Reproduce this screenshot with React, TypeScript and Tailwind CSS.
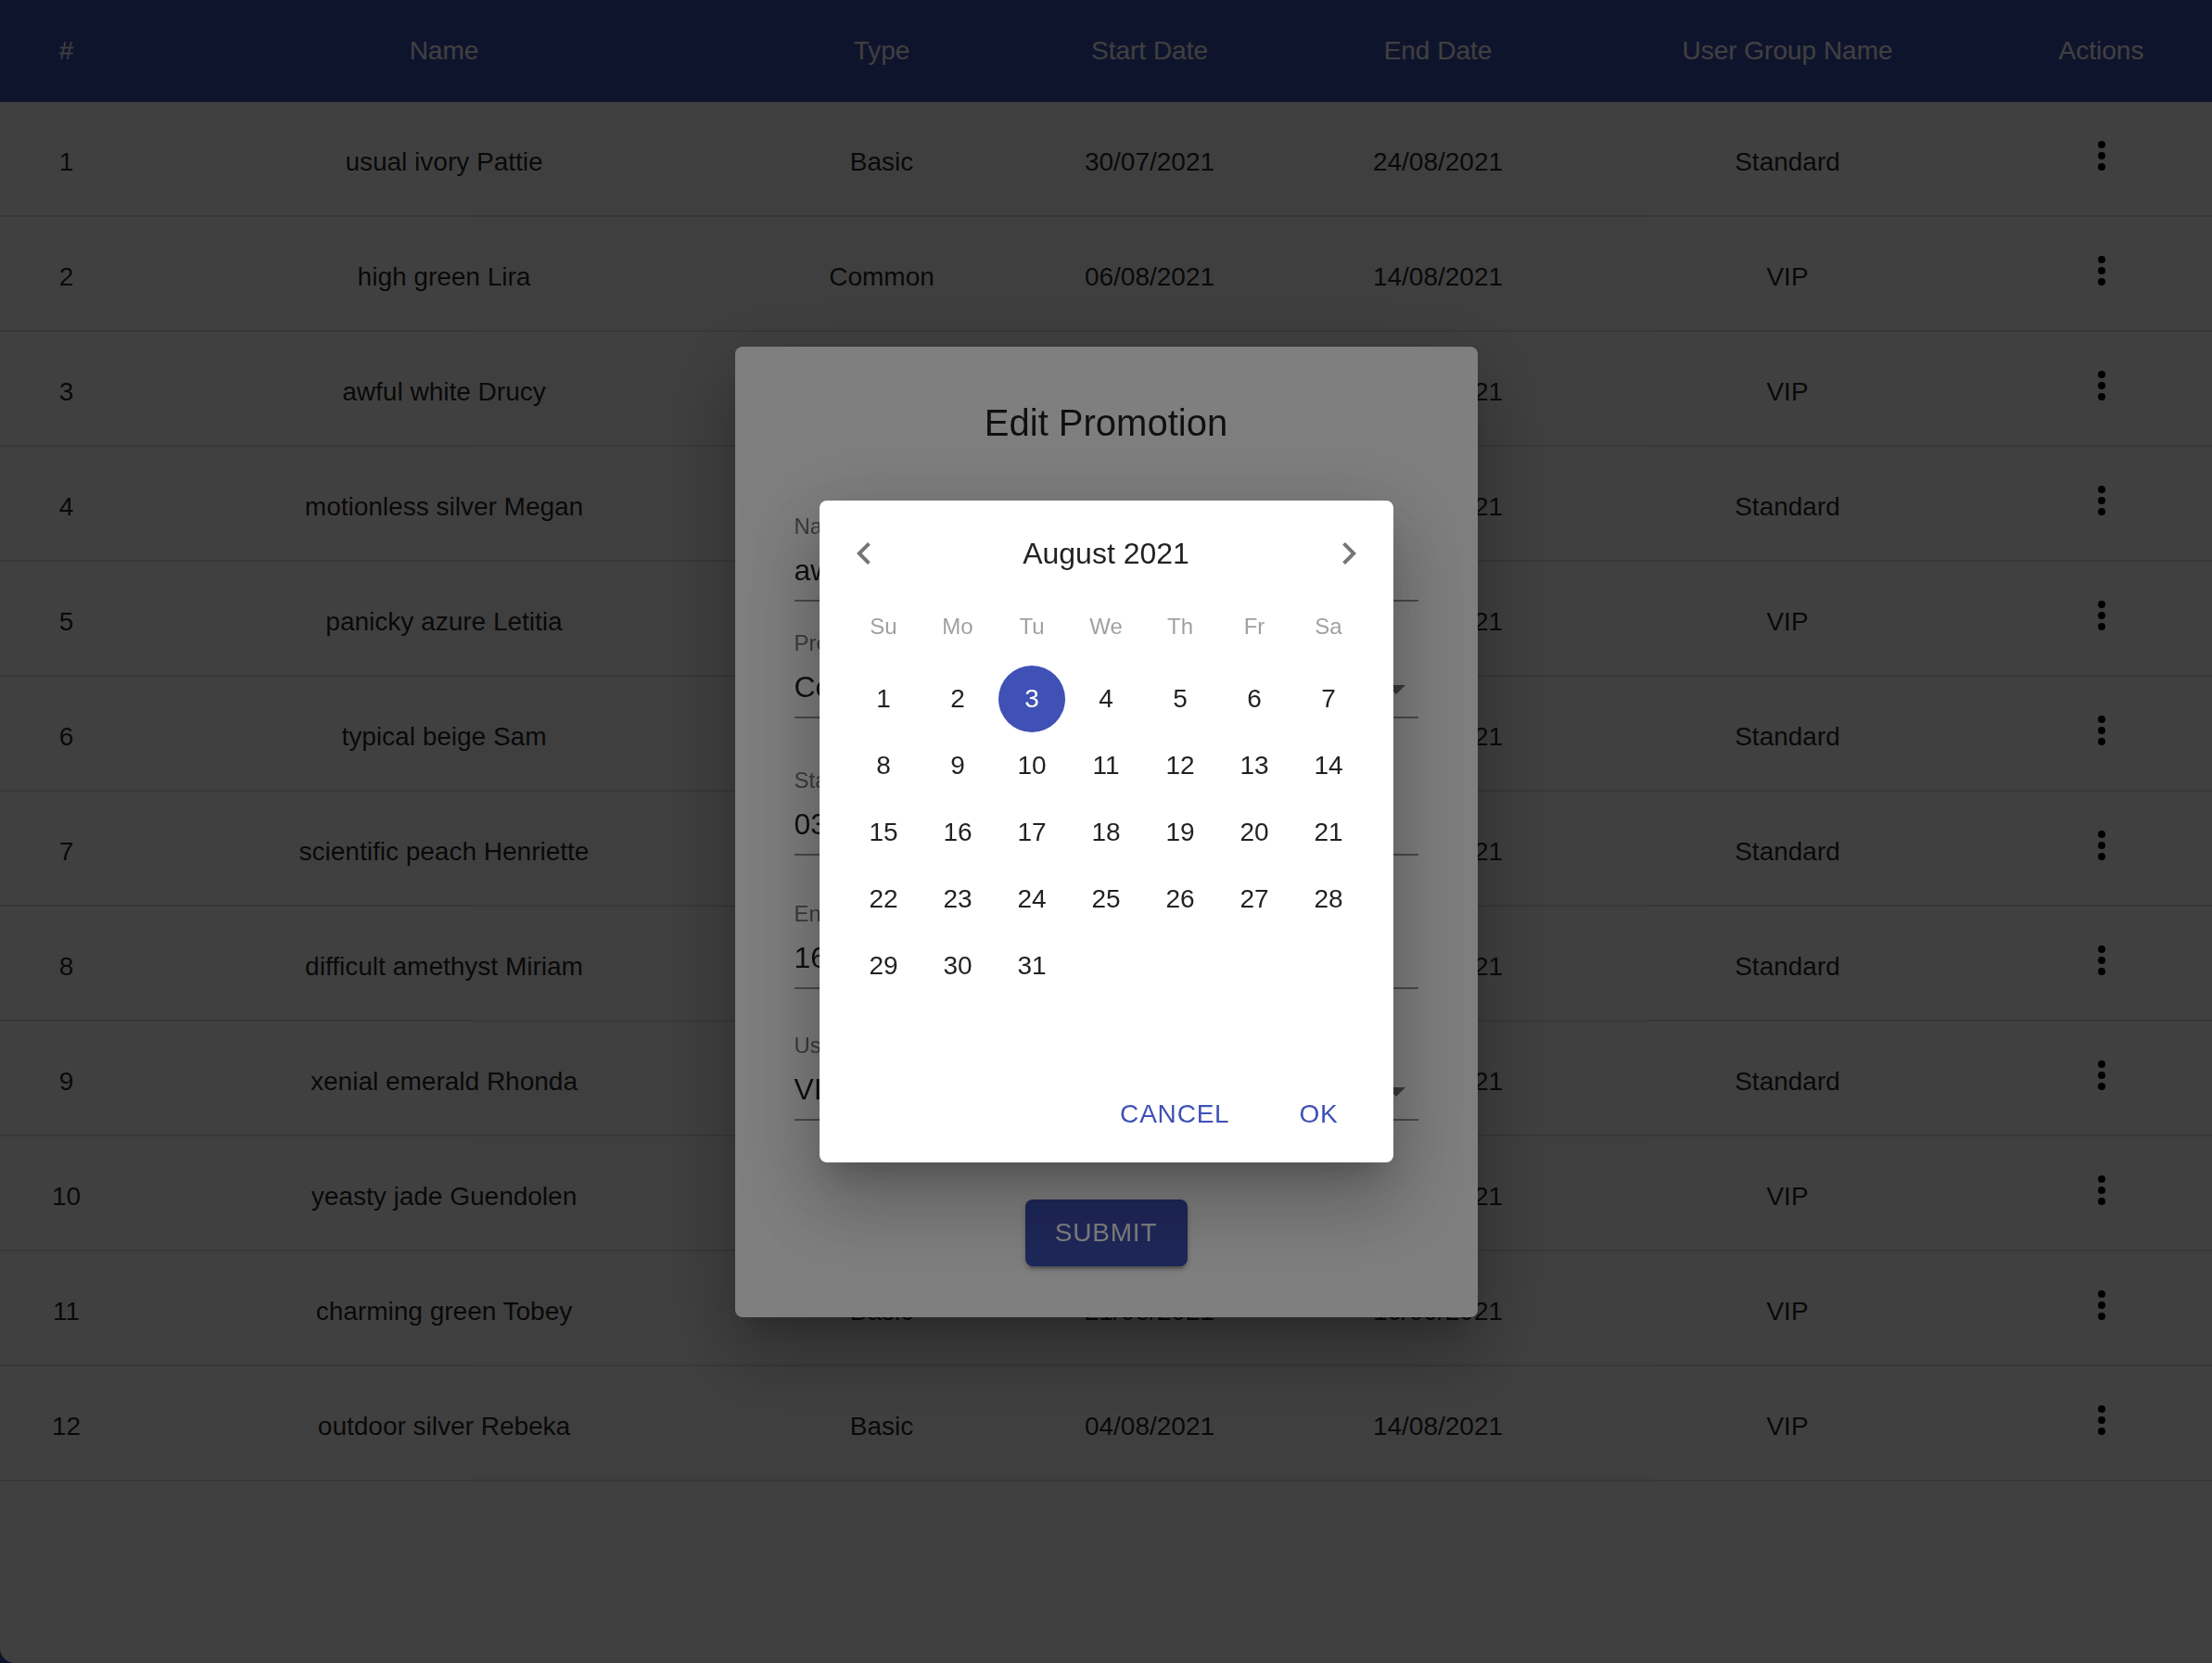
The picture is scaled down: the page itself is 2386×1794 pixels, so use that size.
import React from "react";

const rows = [
  ["1", "usual ivory Pattie", "Basic", "30/07/2021", "24/08/2021", "Standard"],
  ["2", "high green Lira", "Common", "06/08/2021", "14/08/2021", "VIP"],
  ["3", "awful white Drucy", "Common", "03/08/2021", "16/08/2021", "VIP"],
  ["4", "motionless silver Megan", "Basic", "01/08/2021", "20/08/2021", "Standard"],
  ["5", "panicky azure Letitia", "Common", "02/08/2021", "25/08/2021", "VIP"],
  ["6", "typical beige Sam", "Basic", "05/08/2021", "19/08/2021", "Standard"],
  ["7", "scientific peach Henriette", "Common", "07/08/2021", "28/08/2021", "Standard"],
  ["8", "difficult amethyst Miriam", "Basic", "09/08/2021", "22/08/2021", "Standard"],
  ["9", "xenial emerald Rhonda", "Common", "04/08/2021", "18/08/2021", "Standard"],
  ["10", "yeasty jade Guendolen", "Basic", "08/08/2021", "26/08/2021", "VIP"],
  ["11", "charming green Tobey", "Basic", "21/08/2021", "10/09/2021", "VIP"],
  ["12", "outdoor silver Rebeka", "Basic", "04/08/2021", "14/08/2021", "VIP"],
];

const headers = ["#", "Name", "Type", "Start Date", "End Date", "User Group Name", "Actions"];
const weekdays = ["Su", "Mo", "Tu", "We", "Th", "Fr", "Sa"];
// August 2021 starts on a Sunday
const days = Array.from({ length: 31 }, (_, i) => i + 1);

const cols = "grid grid-cols-[143px_672px_272px_306px_316px_438px_1fr] items-center text-center";

const MoreVert = () => (
  <svg width="48" height="48" viewBox="0 0 24 24" className="mx-auto mb-[6px]">
    <circle cx="12" cy="6" r="2" fill="#000" />
    <circle cx="12" cy="12" r="2" fill="#000" />
    <circle cx="12" cy="18" r="2" fill="#000" />
  </svg>
);

const Field = ({
  label,
  value,
  select,
  className,
}: {
  label: string;
  value: string;
  select?: boolean;
  className: string;
}) => (
  <div className={`${className} border-b-2 border-[rgba(0,0,0,0.42)] pb-[12px]`}>
    <div className="h-[28px] text-[24px] leading-[28px] text-[rgba(0,0,0,0.54)]">{label}</div>
    <div className="relative mt-[13px] h-[40px] text-[32px] leading-[40px] text-[rgba(0,0,0,0.87)]">
      {value}
      {select && (
        <svg width="48" height="48" viewBox="0 0 24 24" className="absolute right-0 top-[-2px]">
          <path d="M7 10l5 5 5-5z" fill="rgba(0,0,0,0.54)" />
        </svg>
      )}
    </div>
  </div>
);

export default function App() {
  return (
    <div className="relative h-[1794px] w-[2386px] overflow-hidden bg-[#3f51b5] font-['Liberation_Sans',Arial,sans-serif]">
      {/* Promotions table */}
      <div className="h-full rounded-bl-[16px] bg-white">
        <div className={`${cols} h-[110px] bg-[#3f51b5] text-[28px] text-white`}>
          {headers.map((h) => (
            <div key={h}>{h}</div>
          ))}
        </div>
        {rows.map((r) => (
          <div
            key={r[0]}
            className={`${cols} h-[124px] border-b-2 border-[#e0e0e0] text-[28px] text-[rgba(0,0,0,0.87)]`}
          >
            {r.map((c, i) => (
              <div key={i} className="pt-[7px]">
                {c}
              </div>
            ))}
            <div>
              <MoreVert />
            </div>
          </div>
        ))}
      </div>

      {/* Edit dialog */}
      <div className="fixed inset-0 bg-black/50" />
      <div className="fixed inset-0 flex items-center justify-center">
        <div className="flex h-[1047px] w-[801px] flex-col rounded-[8px] bg-white px-[64px] pt-[58px] shadow-[0_22px_30px_-14px_rgba(0,0,0,0.2),0_48px_76px_6px_rgba(0,0,0,0.14),0_18px_92px_16px_rgba(0,0,0,0.12)]">
          <h2 className="h-[48px] text-center text-[40px] leading-[48px] text-[rgba(0,0,0,0.87)]">
            Edit Promotion
          </h2>
          <Field className="mt-[74px]" label="Name" value="awful white Drucy" />
          <Field className="mt-[31px]" label="Promotion Type" value="Common" select />
          <Field className="mt-[53px]" label="Start Date" value="03/08/2021" />
          <Field className="mt-[49px]" label="End Date" value="16/08/2021" />
          <Field className="mt-[47px]" label="User Group" value="VIP" select />
          <button className="mt-[85px] h-[72px] w-[175px] self-center rounded-[8px] bg-[#3f51b5] text-[28px] tracking-[0.8px] text-white shadow-[0_6px_2px_-4px_rgba(0,0,0,0.2),0_4px_4px_0_rgba(0,0,0,0.14),0_2px_10px_0_rgba(0,0,0,0.12)]">
            SUBMIT
          </button>
        </div>
      </div>

      {/* Date picker dialog */}
      <div className="fixed inset-0 bg-black/50" />
      <div className="fixed inset-0 flex items-center justify-center">
        <div className="flex h-[714px] w-[619px] flex-col rounded-[8px] bg-white pt-[17px] shadow-[0_22px_30px_-14px_rgba(0,0,0,0.2),0_48px_76px_6px_rgba(0,0,0,0.14),0_18px_92px_16px_rgba(0,0,0,0.12)]">
          <div className="flex h-[80px] items-center px-[24px]">
            <svg width="48" height="48" viewBox="0 0 24 24">
              <path d="M15.41 7.41L14 6l-6 6 6 6 1.41-1.41L10.83 12z" fill="rgba(0,0,0,0.54)" />
            </svg>
            <div className="flex-1 text-center text-[32px] text-[rgba(0,0,0,0.87)]">August 2021</div>
            <svg width="48" height="48" viewBox="0 0 24 24">
              <path d="M10 6L8.59 7.41 13.17 12l-4.58 4.59L10 18l6-6z" fill="rgba(0,0,0,0.54)" />
            </svg>
          </div>
          <div className="mx-auto mt-[19px] grid h-[40px] w-[560px] grid-cols-7 items-center text-center text-[24px] text-[rgba(0,0,0,0.38)]">
            {weekdays.map((d) => (
              <div key={d}>{d}</div>
            ))}
          </div>
          <div className="mx-auto mt-[22px] grid h-[432px] w-[560px] grid-cols-7 content-start auto-rows-[72px]">
            {days.map((d) => (
              <div key={d} className="flex items-center justify-center">
                <div
                  className={
                    d === 3
                      ? "flex h-[72px] w-[72px] items-center justify-center rounded-full bg-[#3f51b5] text-[28px] font-medium text-white"
                      : "flex h-[72px] w-[72px] items-center justify-center text-[28px] text-[rgba(0,0,0,0.87)]"
                  }
                >
                  {d}
                </div>
              </div>
            ))}
          </div>
          <div className="flex h-[104px] items-center justify-end gap-[16px] p-[16px]">
            <button className="h-[72px] min-w-[128px] px-[16px] text-[28px] tracking-[0.8px] text-[#3f51b5]">
              CANCEL
            </button>
            <button className="h-[72px] min-w-[128px] px-[16px] text-[28px] tracking-[0.8px] text-[#3f51b5]">
              OK
            </button>
          </div>
        </div>
      </div>
    </div>
  );
}
